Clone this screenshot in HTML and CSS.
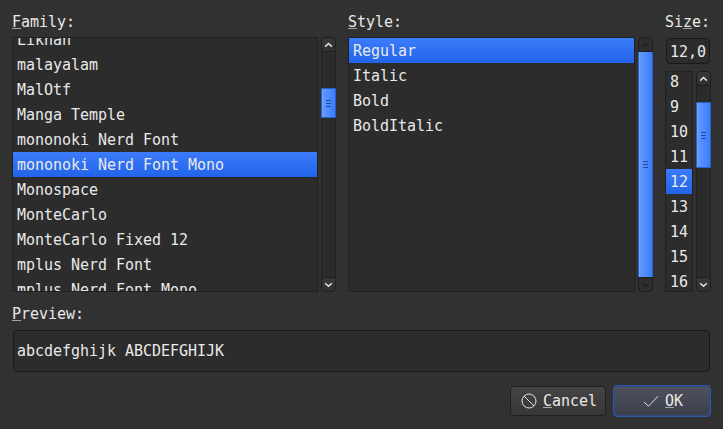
FILE: index.html
```html
<!DOCTYPE html>
<html lang="en">
<head>
<meta charset="utf-8">
<title>Select Font</title>
<link rel="stylesheet" href="styles.css">
</head>
<body>
<main class="dialog">
  <div class="columns">
    <section class="col family">
      <label class="label"><u>F</u>amily:</label>
      <div class="pane">
        <ul class="list list-family">
          <li>Likhan</li><li>malayalam</li><li>MalOtf</li><li>Manga Temple</li><li>mononoki Nerd Font</li><li class="selected">mononoki Nerd Font Mono</li><li>Monospace</li><li>MonteCarlo</li><li>MonteCarlo Fixed 12</li><li>mplus Nerd Font</li><li>mplus Nerd Font Mono</li>
        </ul>
        <div class="scrollbar">
          <div class="arrow up"><svg width="9" height="6" viewBox="0 0 9 6"><path d="M1.2 4.6 4.5 1.5 7.8 4.6"/></svg></div>
          <div class="track track-family"><div class="thumb"><i></i><i></i><i></i></div></div>
          <div class="arrow down"><svg width="9" height="6" viewBox="0 0 9 6"><path d="M1.2 1.2 4.5 4.3 7.8 1.2"/></svg></div>
        </div>
      </div>
    </section>
    <section class="col style">
      <label class="label"><u>S</u>tyle:</label>
      <div class="pane">
        <ul class="list">
          <li class="selected">Regular</li><li>Italic</li><li>Bold</li><li>BoldItalic</li>
        </ul>
        <div class="scrollbar disabled">
          <div class="arrow up"><svg width="9" height="6" viewBox="0 0 9 6"><path d="M1.2 4.6 4.5 1.5 7.8 4.6"/></svg></div>
          <div class="track"><div class="thumb"><i></i><i></i><i></i></div></div>
          <div class="arrow down"><svg width="9" height="6" viewBox="0 0 9 6"><path d="M1.2 1.2 4.5 4.3 7.8 1.2"/></svg></div>
        </div>
      </div>
    </section>
    <section class="col size">
      <label class="label">Si<u>z</u>e:</label>
      <div class="field size-field">12,0</div>
      <div class="pane">
        <ul class="list list-size">
          <li>8</li><li>9</li><li>10</li><li>11</li><li class="selected">12</li><li>13</li><li>14</li><li>15</li><li>16</li>
        </ul>
        <div class="scrollbar">
          <div class="arrow up"><svg width="9" height="6" viewBox="0 0 9 6"><path d="M1.2 4.6 4.5 1.5 7.8 4.6"/></svg></div>
          <div class="track track-size"><div class="thumb"><i></i><i></i><i></i></div></div>
          <div class="arrow down"><svg width="9" height="6" viewBox="0 0 9 6"><path d="M1.2 1.2 4.5 4.3 7.8 1.2"/></svg></div>
        </div>
      </div>
    </section>
  </div>
  <label class="label preview-label"><u>P</u>review:</label>
  <div class="field preview-field">abcdefghijk ABCDEFGHIJK</div>
  <div class="buttons">
    <button class="button cancel"><svg width="16" height="16" viewBox="0 0 16 16"><circle cx="8" cy="8" r="7"/><path d="M3 3 13 13"/></svg><span><u>C</u>ancel</span></button>
    <button class="button ok"><svg width="16" height="16" viewBox="0 0 16 16"><path d="M1 9 5.5 13.2 15 3.2"/></svg><span><u>O</u>K</span></button>
  </div>
</main>
</body>
</html>
```
FILE: styles.css
```css
* { box-sizing: border-box; }
body {
  margin: 0;
  background: #313131;
  color: #e9e9e9;
  font: 15px/27px "DejaVu Sans Mono", monospace;
  letter-spacing: -0.031px;
  white-space: nowrap;
  overflow: hidden;
}
.dialog {
  width: 723px;
  height: 429px;
  padding: 9px 12px 12px;
  display: flex;
  flex-direction: column;
}
.columns { display: flex; gap: 12px; height: 283px; }
.col { display: flex; flex-direction: column; min-height: 0; }
.family { width: 324px; }
.style { width: 305px; }
.size { width: 46px; }
.label { display: block; height: 28px; flex: none; }
u {
  text-decoration: underline 1px #a4a4a4;
  text-underline-offset: 1px;
  text-decoration-skip-ink: none;
}
.pane { flex: 1; min-height: 0; display: flex; gap: 3px; }
.list {
  flex: 1;
  min-width: 0;
  margin: 0;
  padding: 0;
  list-style: none;
  overflow: hidden;
  background: #2c2c2c;
  border: 1px solid #212121;
}
.list li { height: 25px; padding-left: 4px; }
.list-family li:first-child { margin-top: -11px; }
.list-size li:first-child { margin-top: -3px; }
.list .selected { background: linear-gradient(#3c7cfb, #2264e8); }
.scrollbar { width: 15px; flex: none; display: flex; flex-direction: column; }
.arrow {
  height: 15px;
  flex: none;
  display: flex;
  align-items: center;
  justify-content: center;
  border: 1px solid #1e1e1e;
  background: linear-gradient(#383838, #303030);
}
.up { border-radius: 4px 4px 0 0; }
.down { border-radius: 0 0 4px 4px; }
svg { fill: none; stroke: #e4e4e4; flex: none; }
.arrow svg { stroke-width: 1.5; }
.disabled .arrow svg { stroke: #202020; }
.disabled .arrow { background: #2d2d2d; }
.track {
  flex: 1;
  min-height: 0;
  display: flex;
  background: linear-gradient(90deg, #212121 1px, #2b2b2b 1px 14px, #212121 14px);
}
.track-family { padding: 36px 0 159px; }
.track-size { padding: 16px 0 109px; }
.thumb {
  flex: 1;
  display: flex;
  flex-direction: column;
  align-items: center;
  justify-content: center;
  gap: 2px;
  border: 1px solid #2c5ec0;
  background: linear-gradient(90deg, #6ea3ff 1px, #6198ff 1px, #3b7dff);
}
.disabled .thumb { border-top: 0; border-bottom: 0; }
.thumb i { width: 5px; height: 1px; background: #24499a; }
.field {
  background: #2c2c2c;
  border: 1px solid #191919;
  border-radius: 4px;
  padding-left: 3px;
}
.size-field { width: 44px; height: 26px; margin: 1px 0 7px 1px; line-height: 26px; flex: none; }
.preview-label { margin-top: 9px; height: 29px; }
.preview-field { width: 697px; height: 42px; margin-left: 1px; line-height: 40px; }
.buttons { display: flex; justify-content: flex-end; align-items: center; gap: 7px; margin-top: 13px; height: 32px; }
.button {
  display: flex;
  align-items: center;
  justify-content: center;
  gap: 6px;
  font: inherit;
  line-height: 25px;
  letter-spacing: inherit;
  color: inherit;
  padding: 0 0 0 2px;
}
.cancel {
  width: 96px;
  height: 30px;
  border: 1px solid #202020;
  border-radius: 4px;
  background: linear-gradient(#454343, #383737);
}
.ok {
  width: 98px;
  height: 32px;
  border: 1px solid #3058a8;
  box-shadow: inset 0 0 0 1px #30497c;
  border-radius: 4px;
  background: linear-gradient(#50525c, #3a3f4d);
}
```
